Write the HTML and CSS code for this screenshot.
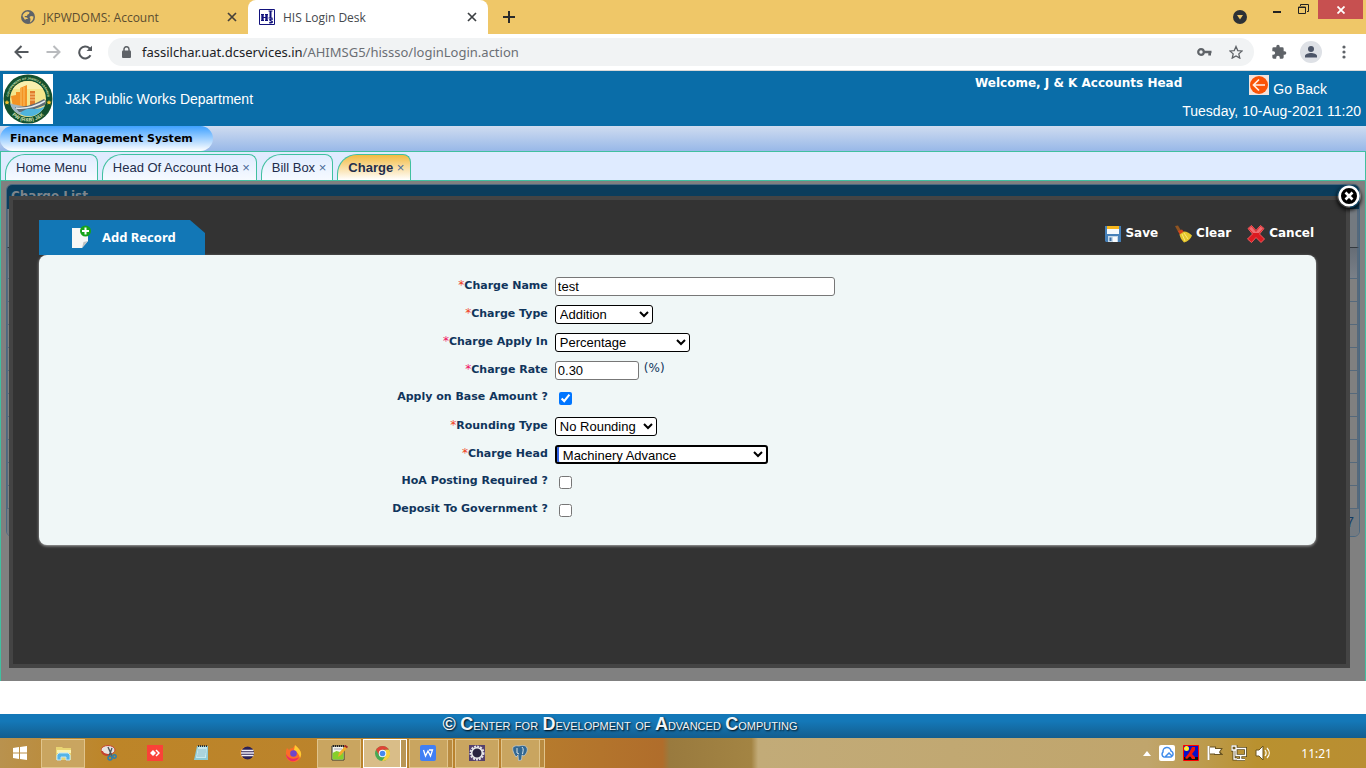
FILE: index.html
```html
<!DOCTYPE html>
<html lang="en">
<head>
<meta charset="utf-8">
<title>HIS Login Desk</title>
<link rel="stylesheet" href="styles.css">
</head>
<body>
<div class="tabstrip">
  <div class="browser-tab">
    <svg width="14" height="14" viewBox="0 0 14 14"><circle cx="7" cy="7" r="7" fill="#5f6368"/><path d="M1.500 6C2 4 3.500 2.200 6 1.500L8.500 2 8 4 6.500 4.500 6 6H4l-.5 1 2.500.5 1 1.500H5L4 10zM9 12.500L9.500 9 8.500 7 10 6l2.500.5c0 3-1.500 5-3.500 6z" fill="#f0c869"/></svg>
    <span class="tab-title">JKPWDOMS: Account</span>
    <button class="icon-btn" aria-label="Close tab"><svg width="10" height="10" viewBox="0 0 10 10"><path d="M1 1l8 8M9 1L1 9" stroke="#46413a" stroke-width="1.700"/></svg></button>
  </div>
  <div class="browser-tab active">
    <svg width="16" height="16" viewBox="0 0 16 16"><path d="M.5.500h15v15H.5z" fill="#fff" stroke="#12127c"/><path d="M2 5h3v1h-.3v2h1.600V6H6V5h3v1h-.3v5H9v1H6v-1h.3V9H4.700v2H5v1H2v-1h.3V6H2zM9.500 1.500h4v1h-1v6h1v1h-4v-1h1v-6h-1z" fill="#12127c"/><path d="M13.800 10.300c-3-.8-3.800.8-1.800 1.600 2.500.8 1.200 2.500-1.800 1.600" fill="none" stroke="#12127c" stroke-width="1.500"/></svg>
    <span class="tab-title">HIS Login Desk</span>
    <button class="icon-btn" aria-label="Close tab"><svg width="10" height="10" viewBox="0 0 10 10"><path d="M1 1l8 8M9 1L1 9" stroke="#3c4043" stroke-width="1.700"/></svg></button>
  </div>
  <button class="icon-btn new-tab" aria-label="New tab"><svg width="12" height="12" viewBox="0 0 12 12"><path d="M6 0v12M0 6h12" stroke="#2b2b2b" stroke-width="2"/></svg></button>
  <div class="window-tools">
    <button class="icon-btn search-tabs" aria-label="Search tabs"><svg width="14" height="14" viewBox="0 0 14 14"><circle cx="7" cy="7" r="7" fill="#2d3136"/><path d="M4 5h6L7 9.500z" fill="#efc768"/></svg></button>
    <button class="icon-btn win-min" aria-label="Minimize"><svg width="8" height="10" viewBox="0 0 8 10"><path d="M0 8h8v2H0z" fill="#222"/></svg></button>
    <button class="icon-btn win-max" aria-label="Restore"><svg width="11" height="10" viewBox="0 0 11 10"><path d="M2.500 2V.500h8v7H9" fill="none" stroke="#222"/><path d="M.5 3h7v6.500h-7zM0 3.500h8" fill="none" stroke="#222"/></svg></button>
    <button class="win-close" aria-label="Close"><svg width="8" height="8" viewBox="0 0 8 8"><path d="M.5.500l7 7M7.500.500l-7 7" stroke="#fff" stroke-width="1.800"/></svg></button>
  </div>
</div>
<div class="toolbar">
  <button class="icon-btn" aria-label="Back"><svg width="15" height="14" viewBox="0 0 15 14"><path d="M14.500 7H1.500M7.500 1l-6 6 6 6" fill="none" stroke="#54585d" stroke-width="2"/></svg></button>
  <button class="icon-btn" aria-label="Forward"><svg width="15" height="14" viewBox="0 0 15 14"><path d="M.5 7h13M7.500 1l6 6-6 6" fill="none" stroke="#b9bbbe" stroke-width="2"/></svg></button>
  <button class="icon-btn" aria-label="Reload"><svg width="15" height="15" viewBox="0 0 15 15"><path d="M12.500 10.300A6 6 0 1 1 11.500 3.200L13 5" fill="none" stroke="#54585d" stroke-width="2"/><path d="M14 .8V6H8.500z" fill="#54585d"/></svg></button>
  <div class="address">
    <svg width="9" height="12" viewBox="0 0 9 12"><path d="M2 5V3.200a2.500 2.500 0 0 1 5 0V5" fill="none" stroke="#5f6368" stroke-width="1.500"/><rect y="4.500" width="9" height="7.500" rx="1" fill="#5f6368"/></svg>
    <span class="url"><span class="host">fassilchar.uat.dcservices.in</span>/AHIMSG5/hissso/loginLogin.action</span>
    <button class="icon-btn" aria-label="Saved passwords"><svg width="15" height="8" viewBox="0 0 15 8"><circle cx="4" cy="4" r="2.800" fill="none" stroke="#5f6368" stroke-width="2.200"/><path d="M7 2.800h7.500v2.400H14V7.500h-2.700V5.200H7z" fill="#5f6368"/></svg></button>
    <button class="icon-btn" aria-label="Bookmark"><svg width="14" height="14" viewBox="0 0 24 23"><path d="M12 2l3 7 7.500.7-5.700 5 1.700 7.300L12 18.200 5.500 22l1.700-7.300-5.700-5L9 9z" fill="none" stroke="#5f6368" stroke-width="2.200"/></svg></button>
  </div>
  <button class="icon-btn" aria-label="Extensions"><svg width="16" height="16" viewBox="0 0 24 24"><path d="M20.500 11H19V7a2 2 0 0 0-2-2h-4V3.500a2.500 2.500 0 0 0-5 0V5H4a2 2 0 0 0-2 2v3.800h1.500a2.700 2.700 0 0 1 0 5.400H2V20a2 2 0 0 0 2 2h3.800v-1.500a2.700 2.700 0 0 1 5.400 0V22H17a2 2 0 0 0 2-2v-4h1.500a2.500 2.500 0 0 0 0-5z" fill="#5f6368"/></svg></button>
  <button class="icon-btn profile" aria-label="Profile"><svg width="22" height="22" viewBox="0 0 22 22"><circle cx="11" cy="11" r="11" fill="#dee1e6"/><circle cx="11" cy="8" r="3" fill="#4c5568"/><path d="M5 16.500v-1.500c0-2 3.500-3 6-3s6 1 6 3v1.500z" fill="#4c5568"/></svg></button>
  <button class="icon-btn" aria-label="Menu"><svg width="4" height="14" viewBox="0 0 4 14"><g fill="#5f6368"><circle cx="2" cy="2" r="1.600"/><circle cx="2" cy="7" r="1.600"/><circle cx="2" cy="12" r="1.600"/></g></svg></button>
</div>

<header class="header">
  <svg class="emblem" width="50" height="50" viewBox="0 0 50 50">
    <rect width="50" height="50" fill="#fff"/><circle cx="25" cy="25" r="24.500" fill="#14502e"/><circle cx="25" cy="25" r="18" fill="#f4e58b"/>
    <path d="M10 15a18 18 0 0 1 30 0z" fill="#f7efae"/>
    <path d="M8 22l5-1v-3h4v-4l7-3v22H10z" fill="#f39324"/><path d="M18 14v18M21 13v19" stroke="#fbc063"/><path d="M27 17h5v14h-5z" fill="#e07c2c"/><path d="M27 20h5M27 23h5M27 26h5" stroke="#fbd08a"/>
    <path d="M7 29c6 3 10 1 16 5l-6 7C11 38 8 34 7 29z" fill="#9fb7c4"/><path d="M12 33c8 0 17-1 29-8l2 2-1 4c-9 4-19 7-26 7z" fill="#5f6c75"/><path d="M13 34c10 1 19-1 29-7" fill="none" stroke="#e7ecee" stroke-width="1.500"/><path d="M17 40c2-4 8-6 14-5 5 0 8-1 11-3a18 18 0 0 1-25 8z" fill="#4fb4dc"/>
    <path d="M4 26l.8 1.500 1.700.2-1.200 1.200.3 1.600L4 29.700l-1.600.8.300-1.600-1.200-1.200 1.700-.2zM46 26l.8 1.500 1.700.2-1.200 1.200.3 1.600-1.600-.8-1.600.8.300-1.600-1.200-1.200 1.700-.2z" fill="#f0c02e"/>
    <path id="arc-top" d="M5.500 25a19.500 19.500 0 0 1 39 0" fill="none"/><path id="arc-bottom" d="M6 37a22.500 22.500 0 0 0 38 0" fill="none"/>
    <text class="seal-text"><textPath href="#arc-top" startOffset="50%" text-anchor="middle">GOVERNMENT OF JAMMU &amp; KASHMIR</textPath></text>
    <text class="seal-text large"><textPath href="#arc-bottom" startOffset="50%" text-anchor="middle">PW (R&amp;B) J&amp;K</textPath></text>
  </svg>
  <h1 class="dept">J&amp;K Public Works Department</h1>
  <div class="session">
    <div class="session-row"><strong class="welcome">Welcome, J &amp; K Accounts Head</strong>
      <a class="go-back" href="#"><svg width="20" height="20" viewBox="0 0 20 20"><rect width="20" height="20" fill="#f3e3dc"/><circle cx="10" cy="10" r="9" fill="#fa5306"/><path d="M16 10H5M10 4.500L4.500 10l5.500 5.500" fill="none" stroke="#fff0e6" stroke-width="1.700"/></svg><span>Go Back</span></a></div>
    <div class="clock">Tuesday, 10-Aug-2021 11:20</div>
  </div>
</header>
<div class="module-bar"><div class="module">Finance Management System</div></div>
<nav class="page-tabs">
  <a class="page-tab" href="#">Home Menu</a>
  <a class="page-tab" href="#">Head Of Account Hoa <span class="x">×</span></a>
  <a class="page-tab" href="#">Bill Box <span class="x">×</span></a>
  <a class="page-tab current" href="#">Charge <span class="x">×</span></a>
</nav>
<main class="workspace">
  <section class="list">
    <h2 class="list-title">Charge List</h2>
    <div class="list-row filter"></div><div class="list-row heading"></div>
    <div class="list-row"></div><div class="list-row"></div><div class="list-row"></div><div class="list-row"></div><div class="list-row"></div>
    <div class="list-row"></div><div class="list-row"></div><div class="list-row"></div><div class="list-row"></div><div class="list-row"></div>
    <div class="list-foot">7</div>
  </section>
  <section class="dialog">
    <button class="dialog-close" aria-label="Close dialog"><svg width="24" height="24" viewBox="0 0 24 24"><circle cx="12" cy="12" r="9.300" fill="#000" stroke="#fff" stroke-width="2.600"/><path d="M8.500 8.500l7 7M15.500 8.500l-7 7" stroke="#fff" stroke-width="2.600"/></svg></button>
    <div class="dialog-head">
      <h2 class="dialog-tab"><svg width="20" height="24" viewBox="0 0 20 24"><path d="M1 3h16v13l-6 7H1z" fill="#f7f7f5"/><path d="M11 23l1.500-6L17 16z" fill="#bfc3c4"/><circle cx="14.500" cy="6" r="5.500" fill="#17a31a"/><path d="M14.500 2.500v7M11 6h7" stroke="#fff" stroke-width="2"/></svg>Add Record</h2>
      <div class="actions">
        <button class="action"><svg width="16" height="16" viewBox="0 0 16 16"><path d="M0 0h16v16H1l-1-1z" fill="#4680b8"/><path d="M2 0h12v8H2z" fill="#f4f8fb"/><path d="M2 0h12v3H2z" fill="#f6b61c"/><path d="M3 10h10v6H3z" fill="#c5d8e8"/><path d="M4.500 11.500h2V15h-2z" fill="#386da2"/><path d="M8 11h4v5H8z" fill="#f8fafc"/></svg>Save</button>
        <button class="action"><svg width="18" height="18" viewBox="0 0 18 18"><path d="M1 1l3-.5 3 5-2.500 2z" fill="#915421"/><path d="M4 6l4-1.500 2 2.500-4 3z" fill="#d6451c"/><path d="M5.500 9.500l4.500-3c3 0 6 2 8 4-1 3-4 6-8 7-2-2-4-5-4.500-8z" fill="#e7c62c"/><path d="M8 9l3 7M10 8l4 6" stroke="#fbe978" fill="none"/></svg>Clear</button>
        <button class="action"><svg width="18" height="18" viewBox="0 0 18 18"><path d="M4.500.5L9 5.500 13.500.5 17 3.500 12.500 9l5 5-3.500 3.500L9 12.500 4.500 17.500.5 14l5-5L1 3.500z" fill="#dc1a20" stroke="#ef5b5f"/><path d="M4.500 1.500L9 7l4.500-5.500 2.500 2-4 4.500H6L2 3.500z" fill="#ef6d70"/></svg>Cancel</button>
      </div>
    </div>
    <form class="card">
      <div class="field"><label for="name"><i>*</i>Charge Name</label><div class="control"><input class="text wide" id="name" type="text" value="test"></div></div>
      <div class="field"><label for="type"><i>*</i>Charge Type</label><div class="control"><select class="select s-type" id="type"><option>Addition</option></select></div></div>
      <div class="field"><label for="apply"><i class="pink">*</i>Charge Apply In</label><div class="control"><select class="select s-apply" id="apply"><option>Percentage</option></select></div></div>
      <div class="field"><label for="rate"><i class="pink">*</i>Charge Rate</label><div class="control"><input class="text short" id="rate" type="text" value="0.30"><span class="unit">(%)</span></div></div>
      <div class="field"><label for="base">Apply on Base Amount ?</label><div class="control"><input class="check" id="base" type="checkbox" checked></div></div>
      <div class="field"><label for="rounding"><i>*</i>Rounding Type</label><div class="control"><select class="select s-round" id="rounding"><option>No Rounding</option></select></div></div>
      <div class="field"><label for="head"><i>*</i>Charge Head</label><div class="control"><select class="select s-head" id="head"><option>Machinery Advance</option></select></div></div>
      <div class="field"><label for="hoa">HoA Posting Required ?</label><div class="control"><input class="check" id="hoa" type="checkbox"></div></div>
      <div class="field"><label for="deposit">Deposit To Government ?</label><div class="control"><input class="check" id="deposit" type="checkbox"></div></div>
    </form>
  </section>
</main>
<footer class="footer"><span><b>©</b> <b>C</b>enter for <b>D</b>evelopment of <b>A</b>dvanced <b>C</b>omputing</span></footer>
<div class="taskbar">
  <button class="task start" aria-label="Start"><svg width="14" height="14" viewBox="0 0 14 14"><path d="M0 2l6-1v5.500H0zM7 .9L14 0v6.500H7zM0 7.500h6V13l-6-1zM7 7.500h7V14l-7-1z" fill="#fff"/></svg></button>
  <button class="task open" aria-label="File Explorer"><svg width="17" height="15" viewBox="0 0 17 15"><path d="M1 1h6l1 1h8v12H1z" fill="#e9d573"/><path d="M2 4h14v3H2z" fill="#fbf2b1"/><path d="M2 14V9l2-2h9l2 2v5h-4v-3H6v3z" fill="#55b4e6" stroke="#c2e6f7"/></svg></button>
  <button class="task" aria-label="Snipping Tool"><svg width="16" height="16" viewBox="0 0 16 16"><ellipse cx="7" cy="5" rx="7" ry="4.500" fill="#e7e4e0" stroke="#c5442f"/><path d="M1 6a6 4 0 0 0 6 4" fill="none" stroke="#c5442f" stroke-width="2"/><path d="M7 2l4 9M11 3l-3 8" stroke="#4d565c" stroke-width="1.400"/><circle cx="9" cy="13" r="2" fill="none" stroke="#2a7fae" stroke-width="1.500"/><circle cx="13.500" cy="11.500" r="1.700" fill="none" stroke="#2a7fae" stroke-width="1.500"/></svg></button>
  <button class="task" aria-label="AnyDesk"><svg width="16" height="16" viewBox="0 0 16 16"><path d="M0 0h16v16H0z" fill="#fa4238"/><path d="M6 5l3 3-3 3-3-3zM8.500 5.500L9.500 4.500 13 8l-3.500 3.500-1-1L11 8z" fill="#fff"/></svg></button>
  <button class="task" aria-label="Notepad"><svg width="15" height="16" viewBox="0 0 15 16"><path d="M3 1h11v14H0z" fill="#8fcbd6"/><path d="M4 2h9l-1 11H2z" fill="#c9e9ee"/><path d="M4 5h8M4 7h8M3.500 9h8M3 11h8" stroke="#72afbd" stroke-width=".7"/><path d="M4 1h10" stroke="#333" stroke-width="2" stroke-dasharray="1 1"/></svg></button>
  <button class="task" aria-label="Eclipse"><svg width="14" height="14" viewBox="0 0 14 14"><circle cx="6.500" cy="7" r="6.500" fill="#e8952b"/><circle cx="7.500" cy="7" r="6.500" fill="#2c2255"/><path d="M1.500 4.500h12M1 7h13M1.500 9.500h12" stroke="#f2f0f8" stroke-width="1.400"/></svg></button>
  <button class="task" aria-label="Firefox"><svg width="17" height="17" viewBox="0 0 17 17"><path d="M2 3l2 2 2-2c1 1 2 0 4-3 1 2 7 5 6 11-1 4-4 6-8 6-5 0-7-4-7-8 0-3 0-4 1-6z" fill="#fb6d28"/><path d="M10 0c5 4 8 8 5 13-1-4-3-6-6-8z" fill="#ffcb30"/><path d="M1 9c2 5 9 6 13 3-2 4-5 5-8 4-3-1-5-4-5-7z" fill="#ec2c62"/><circle cx="8.500" cy="8.500" r="3.300" fill="#7046c9"/></svg></button>
  <button class="task open" aria-label="Notepad++"><svg width="17" height="16" viewBox="0 0 17 16"><path d="M1 1h12v14H1z" fill="#f3f5ec" stroke="#33362e"/><path d="M1.500 8l4-2 7 2v6.500h-11z" fill="#86cf2b"/><path d="M2 1h11" stroke="#222" stroke-width="2" stroke-dasharray="1 1"/><path d="M3 4h8" stroke="#aab"/><path d="M7 12l1-4 6-7 2 2-6 7z" fill="#f3ac2a"/><path d="M13.500.5l3 2" stroke="#a12828" stroke-width="2"/></svg></button>
  <button class="task open chrome-task" aria-label="Chrome"><svg width="15" height="15" viewBox="0 0 16 16"><circle cx="8" cy="8" r="8" fill="#4aaa53"/><path d="M1.100 4A8 8 0 0 1 14.900 4H8L4.500 10z" fill="#df4436"/><path d="M15 4a8 8 0 0 1-7.500 12L11.500 10 11 4z" fill="#f8cf40"/><circle cx="8" cy="8" r="4" fill="#fff"/><circle cx="8" cy="8" r="3" fill="#4788ee"/></svg></button>
  <button class="task open stacked" aria-label="WPS Writer"><svg width="16" height="16" viewBox="0 0 16 16"><rect width="16" height="16" rx="2" fill="#417ff4"/><path d="M3.500 5l2 6L8 6l2.500 5 2-6H9" fill="none" stroke="#fff" stroke-width="1.300"/></svg></button>
  <button class="task open" aria-label="Eclipse IDE"><svg width="16" height="16" viewBox="0 0 16 16"><path d="M0 0h16v16H0z" fill="#54406c"/><circle cx="8" cy="8" r="6.500" fill="none" stroke="#e6e4e8" stroke-width="2" stroke-dasharray="2 1"/><circle cx="8" cy="8" r="5.300" fill="#2a2440" stroke="#eee" stroke-width="1.500"/></svg></button>
  <button class="task open stacked" aria-label="pgAdmin"><svg width="16" height="16" viewBox="0 0 16 16"><path d="M1 2c3-2 5-1 6-1 3-1 7-1 8 2 1 3-1 6-3 8l-2-1-.500 5-3 .5L6 10 4 12C2 9 0 5 1 2z" fill="#336791" stroke="#c8d3d8" stroke-width=".7"/><path d="M5 3v5l2 1M10 2c2 2 1 4 .500 7" fill="none" stroke="#d8e4e8"/></svg></button>
  <div class="tray">
    <svg width="8" height="5" viewBox="0 0 8 5"><path d="M4 0l4 5H0z" fill="#fff"/></svg>
    <svg width="16" height="16" viewBox="0 0 16 16"><rect width="16" height="16" rx="2" fill="#fff"/><path d="M5 12a3 3 0 0 1-1-5 4 4 0 0 1 8-1 3.200 3.200 0 0 1 0 6H6l4-4 3 3" fill="none" stroke="#3f8bea" stroke-width="1.500"/></svg>
    <svg width="16" height="16" viewBox="0 0 16 16"><path d="M.5.500h15v15H.5z" fill="#0710ca" stroke="#f00"/><circle cx="3.500" cy="3.500" r="2.500" fill="#fe3"/><path d="M1 12h14v3H1z" fill="#111"/><path d="M9 2h3v3l-3 4 3 3v2H9l-2-3-3 3-2-1 4-5z" fill="#f31708"/></svg>
    <svg width="16" height="16" viewBox="0 0 16 16"><path d="M1.500 1v14M3 2.500h5v6H3zM8 4h6l-2 3 2 2H8z" fill="#fff" stroke="#685321" stroke-width="2"/><path d="M1.500 1v14" stroke="#fff" stroke-width="2"/><path d="M3 2.500h5v6H3zM8 4h6l-2 3 1 2H8z" fill="#fff"/></svg>
    <svg width="16" height="16" viewBox="0 0 16 16"><path d="M5 3.500h9.500v7H5zM9.700 11v3M6 14.500h8M1 1h4v4H1zM3 5v9h3" fill="none" stroke="#584717" stroke-width="3"/><path d="M5 3.500h9.500v7H5zM9.700 11v3M6 14.500h8M1 1h4v4H1zM3 5v9h3" fill="none" stroke="#fff" stroke-width="1.300"/></svg>
    <svg width="16" height="16" viewBox="0 0 16 16"><path d="M1 5h3l4-4v14l-4-4H1z" fill="#fff" stroke="#6a551d"/><path d="M10 5c1.500 2 1.500 4 0 6M12 3c3 3 3 7 0 10" fill="none" stroke="#fff" stroke-width="1.200"/></svg>
    <span class="time">11:21</span>
  </div>
</div>
</body>
</html>
```
FILE: styles.css
```css
* { box-sizing: border-box; }
body {
  margin: 0;
  min-height: 100vh;
  display: flex;
  flex-direction: column;
  background: #fff;
  font-family: "Liberation Sans", Arial, sans-serif;
  font-size: 14px;
}
svg { display: block; flex: none; }
h1, h2 { margin: 0; font-size: inherit; font-weight: inherit; }
a { color: inherit; text-decoration: none; }
button { font: inherit; color: inherit; cursor: pointer; }
.icon-btn { padding: 0; border: 0; background: none; }

/* Browser chrome */
.tabstrip { display: flex; height: 34px; background: #efc768; color: #5b4d30; font: 12px "Open Sans", sans-serif; }
.browser-tab { display: flex; align-items: center; gap: 8px; width: 248px; padding: 0 11px 0 21px; }
.browser-tab.active { width: 240px; padding-left: 11px; background: #fff; border-radius: 8px 8px 0 0; color: #45494d; }
.tab-title { flex: 1; }
.new-tab { margin-left: 15px; }
.window-tools { display: flex; align-items: flex-start; margin-left: auto; }
.search-tabs { margin: 10px 26px 0 0; }
.win-min { margin: 3px 17px 0 0; }
.win-max { margin: 4px 9px 0 0; }
.win-close { display: flex; align-items: center; justify-content: center; width: 45px; height: 19px; margin-right: 3px; padding: 0; border: 0; background: #c75050; }
.toolbar { display: flex; align-items: center; gap: 17px; height: 37px; padding: 0 20px 0 14px; border-bottom: 1px solid #d9d9d9; background: #fff; }
.address { flex: 1; display: flex; align-items: center; gap: 17px; height: 28px; margin-left: -2px; padding: 0 11px 0 14px; border-radius: 14px; background: #f1f3f4; color: #6b6f74; font: 13px "Noto Sans", sans-serif; }
.url { flex: 1; margin-left: -6px; }
.host { color: #202124; }
.profile { margin: 0 3px 0 -4px; }

/* Application header */
.header { display: flex; align-items: center; height: 55px; padding: 0 5px 0 3px; background: #0a6da8; color: #fff; }
.dept { flex: 1; margin-left: 12px; }
.seal-text { fill: #d5e4b4; font: bold 3px "Liberation Sans", sans-serif; }
.seal-text.large { font-size: 5px; }
.session { display: flex; flex-direction: column; align-items: flex-end; gap: 6px; padding-bottom: 4px; }
.session-row { display: flex; align-items: flex-start; padding-right: 34px; }
.welcome { font: bold 12px "DejaVu Sans", sans-serif; line-height: 16px; }
.go-back { display: flex; align-items: flex-end; gap: 4px; height: 22px; margin-left: 67px; }
.go-back svg { align-self: flex-start; }
.module-bar { height: 25px; background: linear-gradient(#cfdcf0, #98b8e8); }
.module { display: inline-flex; align-items: center; height: 25px; padding: 0 20px 0 10px; border-radius: 13px; background: linear-gradient(#3da0ff, #fff); color: #000; font: bold 11px "DejaVu Sans", sans-serif; }
.page-tabs { display: flex; align-items: flex-end; gap: 4px; height: 29px; padding: 0 4px; border: solid #40c0a0; border-width: 1px 1px 0; background: #dfebff; color: #222d4c; font-size: 13px; }
.page-tab { height: 26px; padding: 0 10px; border: 1px solid #40c0a0; border-bottom: 0; border-radius: 20px 8px 0 0; background: linear-gradient(#e0ecff, #f6faff); line-height: 26px; }
.page-tab:nth-child(n+2) { padding-right: 6px; }
.page-tab.current { background: linear-gradient(#f3bb42, #fff); font-weight: bold; }
.x { color: #4a6a98; font-weight: normal; }

/* Workspace with the dimmed list and the dialog over it */
.workspace { position: relative; flex: 1; margin-bottom: 33px; padding: 3px 5px; border: solid #40c0a0; border-width: 1px 1px 0; background: #808080; }
.list { border: 1px solid #4b6880; border-radius: 6px; overflow: hidden; }
.list-title { height: 24px; padding: 4px; background: #0b3d5c; color: #7e858b; font: bold 12px "DejaVu Sans", sans-serif; }
.list-row { height: 23px; border: solid #55697c; border-width: 0 2px 1px 1px; }
.list-row.filter { height: 39px; background: #747a80; border-bottom-color: #343a40; }
.list-row.heading { height: 31px; background: linear-gradient(#666d76, #7a8088); }
.list-foot { height: 27px; padding: 5px; background: #747a80; color: #123b63; text-align: right; line-height: 16px; }
.dialog { position: absolute; inset: 15px 15px 13px 8px; padding: 20px 30px 0 26px; border: 4px solid #444; background: #333; color: #fff; }
.dialog-close { position: absolute; top: -16px; right: -15px; padding: 0; border: 0; border-radius: 50%; background: none; box-shadow: 0 2px 4px #000; }
.dialog-head { display: flex; justify-content: space-between; height: 35px; }
.dialog-tab { display: flex; align-items: center; gap: 11px; width: 166px; padding: 0 0 2px 32px; background: #1277b6; clip-path: polygon(0 0, 151px 0, 100% 13px, 100% 100%, 0 100%); font: bold 13px "Noto Sans", sans-serif; }
.actions { display: flex; align-items: flex-start; gap: 16px; padding: 4px 2px 0 0; }
.action { display: flex; align-items: center; gap: 4px; height: 18px; padding: 0; border: 0; background: none; font: bold 12px "DejaVu Sans", sans-serif; }
.action svg { margin-top: 2px; }
.card { padding: 17px 0 21px; border-radius: 8px; background: #f0f7f7; box-shadow: 0 1px 3px #aaa; color: #10355c; }
.field { display: grid; grid-template-columns: 40% 1fr; height: 28px; }
.field label { padding: 6px 2px 0 0; text-align: right; font: bold 11px/14px "DejaVu Sans", sans-serif; }
.field i { color: #f04020; font-style: normal; font-weight: normal; font-size: 12px; }
.field i.pink { color: #f01060; }
.control { display: flex; align-items: center; padding: 0 0 0 5px; }
.text, .select { height: 19px; border: 1px solid #777; border-radius: 3px; background: #fff; color: #000; font: 13px "Liberation Sans", sans-serif; }
.text { padding: 0 2px; }
.select { padding: 0; border-color: #000; }
.wide { width: 280px; }
.short { width: 84px; }
.s-type { width: 98px; }
.s-apply { width: 135px; }
.s-round { width: 102px; }
.s-head { width: 213px; border-width: 2px; box-shadow: inset 2px 0 #3264e8; padding-left: 2px; }
.check { width: 13px; height: 13px; margin: 0 4px; }
.unit { margin: -4px 0 0 5px; font: 12px "DejaVu Sans", sans-serif; }

.footer { height: 24px; background: linear-gradient(#1478b8 30%, #135d8e); color: #f2f5f8; text-align: center; text-shadow: 1px 1px 2px #000; font: 16px/21px "Liberation Sans Narrow", "Liberation Sans", sans-serif; font-variant: small-caps; }
.footer b { font-size: 18px; }
.footer span { margin-right: 126px; }

/* Desktop taskbar */
.taskbar { display: flex; align-items: center; height: 30px; background: linear-gradient(to right, #b9924e, #bd8528 8%, #b9822e 35%, #b06d2b 48.500%, #997a3e 49%, #a38443 55%, #c2ab78 55.500%, #c0a56c 84%, #b9912f 92%, #b98e32); }
.task { display: flex; align-items: center; justify-content: center; width: 46px; height: 29px; padding: 0; border: 1px solid transparent; background: none; }
.task.start { width: 40px; }
.task.open { width: 44px; margin: 0 1px; border-color: #e0c48c; background: #c9a560; }
.task.chrome-task { padding-right: 6px; border-color: #fff; box-shadow: inset -5px 0 #b99656, inset -6px 0 #fff; background: #d9bd88; }
.task.stacked { padding-right: 6px; box-shadow: inset -4px 0 #b98b40, inset -5px 0 #e0c48c; }
.tray { display: flex; align-items: center; gap: 8px; margin-left: auto; padding-right: 34px; color: #fff; font: 12px "Noto Sans", sans-serif; }
.time { margin-left: 22px; }
```
